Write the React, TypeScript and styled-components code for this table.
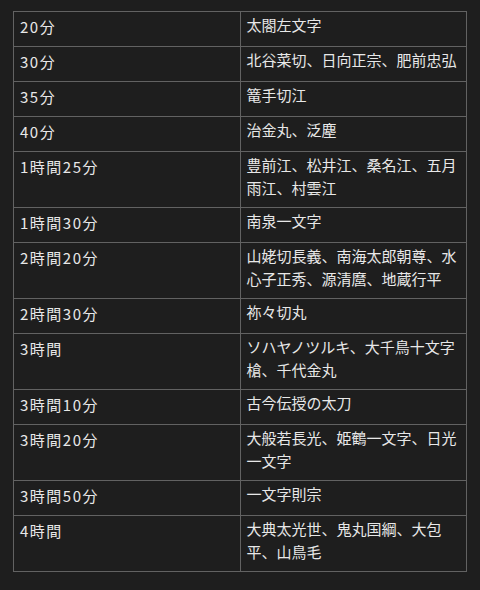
import React from "react";
import styled, { createGlobalStyle } from "styled-components";

const GlobalStyle = createGlobalStyle`
  html, body {
    margin: 0;
    padding: 0;
    background: #1e1e1e;
  }
  body {
    font-family: "Noto Sans CJK JP", "Noto Sans", sans-serif;
  }
`;

const Page = styled.div`
  width: 480px;
  min-height: 590px;
  box-sizing: border-box;
  padding: 11px 13px;
  background: #1e1e1e;
`;

const Table = styled.table`
  width: 454px;
  border-collapse: collapse;
  table-layout: fixed;
  border: 1px solid #626262;
  color: #e8e8e8;
  font-size: 15px;
`;

const Row = styled.tr`
  border-bottom: 1px solid #626262;
`;

const TimeCell = styled.td`
  width: 50%;
  vertical-align: top;
  padding: 3px 6px 7px;
  line-height: 24px;
  letter-spacing: 1.5px;
  border-right: 1px solid #626262;
  white-space: nowrap;
`;

const NameCell = styled.td`
  width: 50%;
  vertical-align: top;
  padding: 1px 6px 8px;
  line-height: 23px;
  line-break: strict;
`;

const rows: [string, string][] = [
  ["20分", "太閤左文字"],
  ["30分", "北谷菜切、日向正宗、肥前忠弘"],
  ["35分", "篭手切江"],
  ["40分", "治金丸、泛塵"],
  ["1時間25分", "豊前江、松井江、桑名江、五月雨江、村雲江"],
  ["1時間30分", "南泉一文字"],
  ["2時間20分", "山姥切長義、南海太郎朝尊、水心子正秀、源清麿、地蔵行平"],
  ["2時間30分", "祢々切丸"],
  ["3時間", "ソハヤノツルキ、大千鳥十文字槍、千代金丸"],
  ["3時間10分", "古今伝授の太刀"],
  ["3時間20分", "大般若長光、姫鶴一文字、日光一文字"],
  ["3時間50分", "一文字則宗"],
  ["4時間", "大典太光世、鬼丸国綱、大包平、山鳥毛"],
];

export default function App() {
  return (
    <Page>
      <GlobalStyle />
      <Table>
        <tbody>
          {rows.map(([time, names]) => (
            <Row key={time}>
              <TimeCell>{time}</TimeCell>
              <NameCell>{names}</NameCell>
            </Row>
          ))}
        </tbody>
      </Table>
    </Page>
  );
}
